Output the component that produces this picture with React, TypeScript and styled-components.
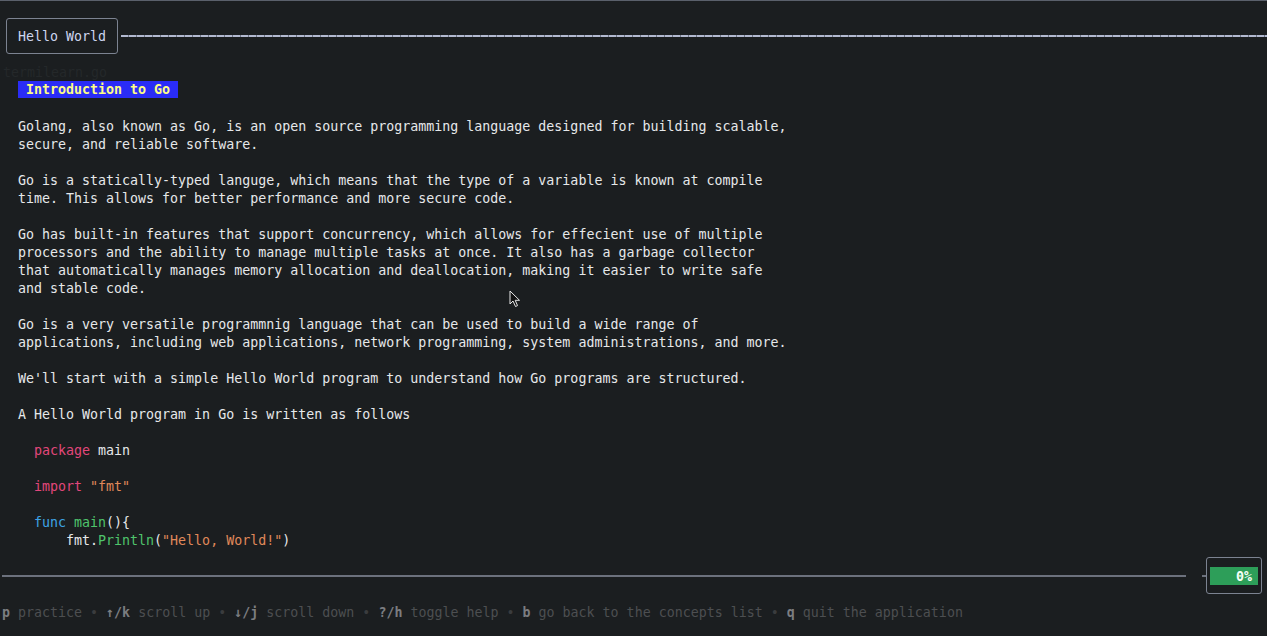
import React from "react";
import styled, { createGlobalStyle } from "styled-components";

const Global = createGlobalStyle`
  html, body { margin: 0; padding: 0; background: #1b1e20; }
  body { font-family: "DejaVu Sans Mono", "Liberation Mono", monospace; font-size: 13.3px; color: #e6e8ea; }
`;

const Screen = styled.div`
  position: relative;
  width: 1267px;
  height: 636px;
  box-sizing: border-box;
  border-top: 1px solid #5a606b;
  display: flex;
  flex-direction: column;
  overflow: hidden;
`;

const Header = styled.div`
  display: flex;
  align-items: center;
  padding: 17px 0 0 6px;
`;

const TitleBox = styled.div`
  box-sizing: border-box;
  height: 36px;
  line-height: 36px;
  padding: 0 11px;
  border: 1px solid #7c8391;
  border-radius: 3px;
  color: #cdd5f0;
  white-space: pre;
`;

const DashRule = styled.div`
  flex: 1;
  height: 2px;
  margin-left: 3px;
  background: repeating-linear-gradient(90deg, #b2b9d0 0 7px, #6d7384 7px 8px);
`;

const Ghost = styled.div`
  margin-top: 9px;
  padding-left: 3px;
  height: 18px;
  line-height: 20px;
  color: #24282a;
`;

const Content = styled.div`
  flex: 1;
  padding-left: 18px;
  white-space: pre;
`;

const LabelRow = styled.div`
  height: 18px;
`;

const Label = styled.span`
  display: inline-block;
  height: 17px;
  line-height: 18px;
  padding: 0 8px;
  background: #2a2cf6;
  color: #fdfd86;
  font-weight: bold;
`;

const Line = styled.div<{ $indent?: number }>`
  height: 18px;
  line-height: 20px;
  padding-left: ${(p) => (p.$indent ?? 0) * 8}px;
`;

const Tok = styled.span<{ $c: string }>`
  color: ${(p) => p.$c};
`;

const ProgressRow = styled.div`
  display: flex;
  align-items: center;
  height: 37px;
  padding-left: 2px;
`;

const SolidRule = styled.div`
  flex: 1;
  height: 2px;
  background: #6c717d;
`;

const Tick = styled.div`
  width: 4px;
  height: 2px;
  margin-left: 16px;
  background: #6c717d;
`;

const ProgressBox = styled.div`
  box-sizing: border-box;
  width: 56px;
  height: 37px;
  margin: 0 5px 0 0;
  padding: 0 3px;
  border: 1px solid #7c8391;
  border-radius: 3px;
  display: flex;
  align-items: center;
`;

const Bar = styled.div`
  width: 48px;
  height: 18px;
  background: #2d9e59;
  color: #f4fff6;
  font-weight: bold;
  text-align: right;
  line-height: 19px;
  padding-right: 6px;
  box-sizing: border-box;
`;

const Footer = styled.div`
  margin: 9px 0 15px;
  padding-left: 2px;
  height: 18px;
  line-height: 20px;
  white-space: pre;
  color: #4d4f51;
`;

const Key = styled.span`
  color: #7b7d80;
  font-weight: bold;
`;

const Dot = styled.span`
  color: #3a3c3e;
`;

const Cursor = styled.svg`
  position: absolute;
  left: 509px;
  top: 289px;
`;

const C = {
  kw: "#e2477b",
  str: "#e0895a",
  fn: "#3ea3e6",
  green: "#4fc46c",
};

const paragraphs: string[][] = [
  [
    "Golang, also known as Go, is an open source programming language designed for building scalable,",
    "secure, and reliable software.",
  ],
  [
    "Go is a statically-typed languge, which means that the type of a variable is known at compile",
    "time. This allows for better performance and more secure code.",
  ],
  [
    "Go has built-in features that support concurrency, which allows for effecient use of multiple",
    "processors and the ability to manage multiple tasks at once. It also has a garbage collector",
    "that automatically manages memory allocation and deallocation, making it easier to write safe",
    "and stable code.",
  ],
  [
    "Go is a very versatile programmnig language that can be used to build a wide range of",
    "applications, including web applications, network programming, system administrations, and more.",
  ],
  ["We'll start with a simple Hello World program to understand how Go programs are structured."],
  ["A Hello World program in Go is written as follows"],
];

const helpItems: [string, string][] = [
  ["p", "practice"],
  ["↑/k", "scroll up"],
  ["↓/j", "scroll down"],
  ["?/h", "toggle help"],
  ["b", "go back to the concepts list"],
  ["q", "quit the application"],
];

export default function App() {
  return (
    <>
      <Global />
      <Screen>
        <Header>
          <TitleBox>Hello World</TitleBox>
          <DashRule />
        </Header>
        <Ghost>termilearn.go</Ghost>
        <Content>
          <LabelRow>
            <Label>Introduction to Go</Label>
          </LabelRow>
          <Line />
          {paragraphs.map((p, i) => (
            <React.Fragment key={i}>
              {p.map((l, j) => (
                <Line key={j}>{l}</Line>
              ))}
              <Line />
            </React.Fragment>
          ))}
          <Line $indent={2}>
            <Tok $c={C.kw}>package</Tok> main
          </Line>
          <Line />
          <Line $indent={2}>
            <Tok $c={C.kw}>import</Tok> <Tok $c={C.str}>"fmt"</Tok>
          </Line>
          <Line />
          <Line $indent={2}>
            <Tok $c={C.fn}>func</Tok> <Tok $c={C.green}>main</Tok>(){"{"}
          </Line>
          <Line $indent={6}>
            fmt.<Tok $c={C.green}>Println</Tok>(<Tok $c={C.str}>"Hello, World!"</Tok>)
          </Line>
        </Content>
        <ProgressRow>
          <SolidRule />
          <Tick />
          <ProgressBox>
            <Bar>0%</Bar>
          </ProgressBox>
        </ProgressRow>
        <Footer>
          {helpItems.map(([k, d], i) => (
            <React.Fragment key={k}>
              {i > 0 && <Dot> • </Dot>}
              <Key>{k}</Key> {d}
            </React.Fragment>
          ))}
        </Footer>
        <Cursor width="12" height="18" viewBox="0 0 12 18">
          <path
            d="M1 1 L1 14 L4 11 L6.5 16.5 L8.5 15.6 L6.2 10.3 L10.5 10.3 Z"
            fill="#111"
            stroke="#e8e8e8"
            strokeWidth="1"
            strokeLinejoin="round"
          />
        </Cursor>
      </Screen>
    </>
  );
}
